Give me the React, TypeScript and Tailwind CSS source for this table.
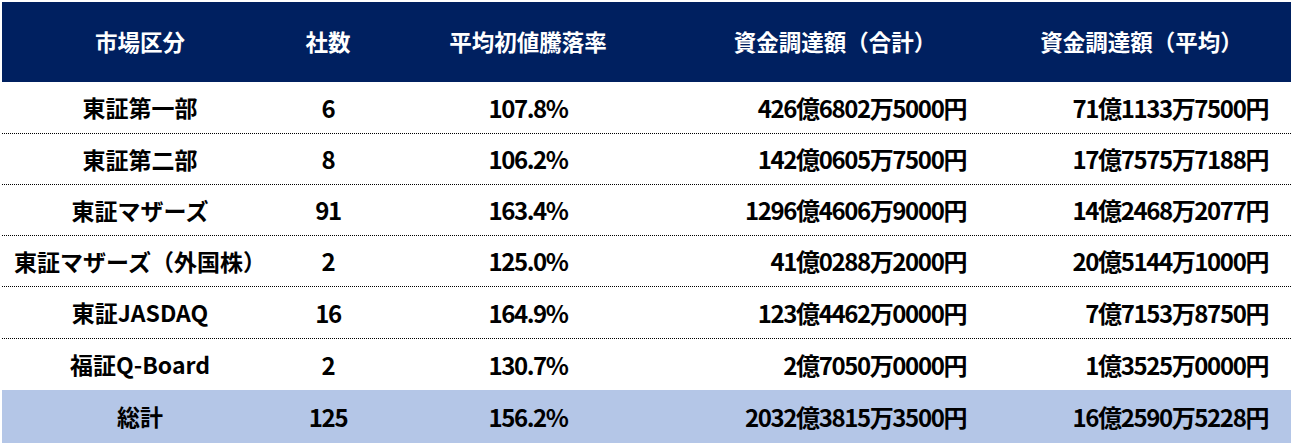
const rows = [
  { market: "東証第一部", count: "6", rate: "107.8%", total: "426億6802万5000円", avg: "71億1133万7500円", h: "h-[52px]" },
  { market: "東証第二部", count: "8", rate: "106.2%", total: "142億0605万7500円", avg: "17億7575万7188円", h: "h-[51px]" },
  { market: "東証マザーズ", count: "91", rate: "163.4%", total: "1296億4606万9000円", avg: "14億2468万2077円", h: "h-[51px]" },
  { market: "東証マザーズ（外国株）", count: "2", rate: "125.0%", total: "41億0288万2000円", avg: "20億5144万1000円", h: "h-[51px]" },
  { market: "東証JASDAQ", count: "16", rate: "164.9%", total: "123億4462万0000円", avg: "7億7153万8750円", h: "h-[52px]" },
  { market: "福証Q-Board", count: "2", rate: "130.7%", total: "2億7050万0000円", avg: "1億3525万0000円", h: "h-[51px]" },
];

const cols = "grid grid-cols-[276px_100px_300px_314px_299px]";
const font = "font-['Noto_Sans_CJK_JP',sans-serif] font-bold";
const num = "text-[24px] tracking-[-1.4px]";

export default function App() {
  return (
    <div className="w-[1292px] h-[444px] bg-white pt-[2px] pl-[2px] overflow-hidden">
      <div className="w-[1289px]">
        {/* header */}
        <div className={`${cols} h-[80px] items-center bg-[#002060] text-white text-[22.5px] font-bold font-['Noto_Sans_CJK_JP',sans-serif]`}>
          <div className="text-center">市場区分</div>
          <div className="text-center">社数</div>
          <div className="text-center">平均初値騰落率</div>
          <div className="text-center">資金調達額（合計）</div>
          <div className="text-center">資金調達額（平均）</div>
        </div>

        {rows.map((r, i) => (
          <div
            key={r.market}
            className={`${cols} ${r.h} items-center text-black ${font} ${i < rows.length - 1 ? "border-b border-dotted border-black" : ""}`}
          >
            <div className="text-center text-[23px] whitespace-nowrap">{r.market}</div>
            <div className={`text-center ${num}`}>{r.count}</div>
            <div className={`text-center ${num}`}>{r.rate}</div>
            <div className={`text-right pr-[26px] ${num}`}>{r.total}</div>
            <div className={`text-right pr-[23px] ${num}`}>{r.avg}</div>
          </div>
        ))}

        {/* total */}
        <div className={`${cols} h-[53px] items-center bg-[#B4C6E7] text-black ${font}`}>
          <div className="text-center text-[23px]">総計</div>
          <div className={`text-center ${num}`}>125</div>
          <div className={`text-center ${num}`}>156.2%</div>
          <div className={`text-right pr-[26px] ${num}`}>2032億3815万3500円</div>
          <div className={`text-right pr-[23px] ${num}`}>16億2590万5228円</div>
        </div>
      </div>
    </div>
  );
}
